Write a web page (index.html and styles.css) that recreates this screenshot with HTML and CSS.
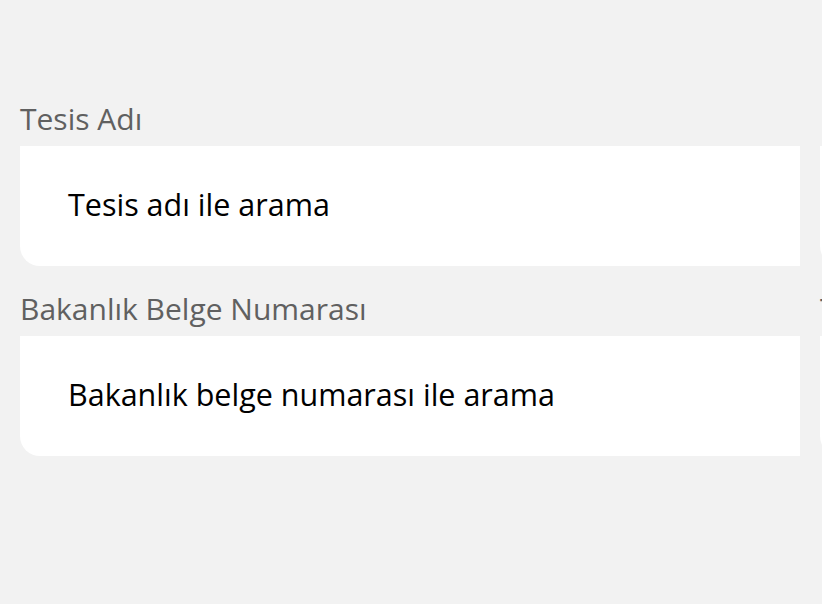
FILE: index.html
```html
<!DOCTYPE html>
<html lang="tr">
<head>
<meta charset="utf-8">
<title>Tesis Arama</title>
<link rel="stylesheet" href="styles.css">
</head>
<body>
<div class="page">
  <div class="grid">
    <div class="col">
      <div class="field">
        <label class="label">Tesis Adı</label>
        <div class="input"><span class="placeholder">Tesis adı ile arama</span></div>
      </div>
      <div class="field">
        <label class="label">Bakanlık Belge Numarası</label>
        <div class="input"><span class="placeholder">Bakanlık belge numarası ile arama</span></div>
      </div>
    </div>
    <div class="col">
      <div class="field">
        <label class="label">&nbsp;</label>
        <div class="input"><span class="placeholder">&nbsp;</span></div>
      </div>
      <div class="field">
        <label class="label">Tesis Türü</label>
        <div class="input"><span class="placeholder">&nbsp;</span></div>
      </div>
    </div>
  </div>
</div>
</body>
</html>
```

FILE: styles.css
```css
html, body {
  margin: 0;
  padding: 0;
  background: #f2f2f2;
}
body {
  font-family: "Open Sans", "Liberation Sans", sans-serif;
  width: 822px;
  height: 604px;
  overflow: hidden;
}
.page {
  padding: 76px 0 0 20px;
}
.grid {
  display: flex;
  gap: 20px;
}
.col {
  flex: 0 0 780px;
  display: flex;
  flex-direction: column;
}
.field {
  display: flex;
  flex-direction: column;
}
.label {
  height: 70px;
  box-sizing: border-box;
  display: flex;
  align-items: flex-end;
  font-size: 30px;
  line-height: 30px;
  padding-bottom: 12px;
  color: #606060;
}
.input {
  height: 120px;
  box-sizing: border-box;
  background: #ffffff;
  border-radius: 0 0 0 20px;
  display: flex;
  align-items: center;
  padding: 0 0 4px 48px;
}
.placeholder {
  font-size: 30.5px;
  line-height: 30px;
  color: #000000;
}
```
